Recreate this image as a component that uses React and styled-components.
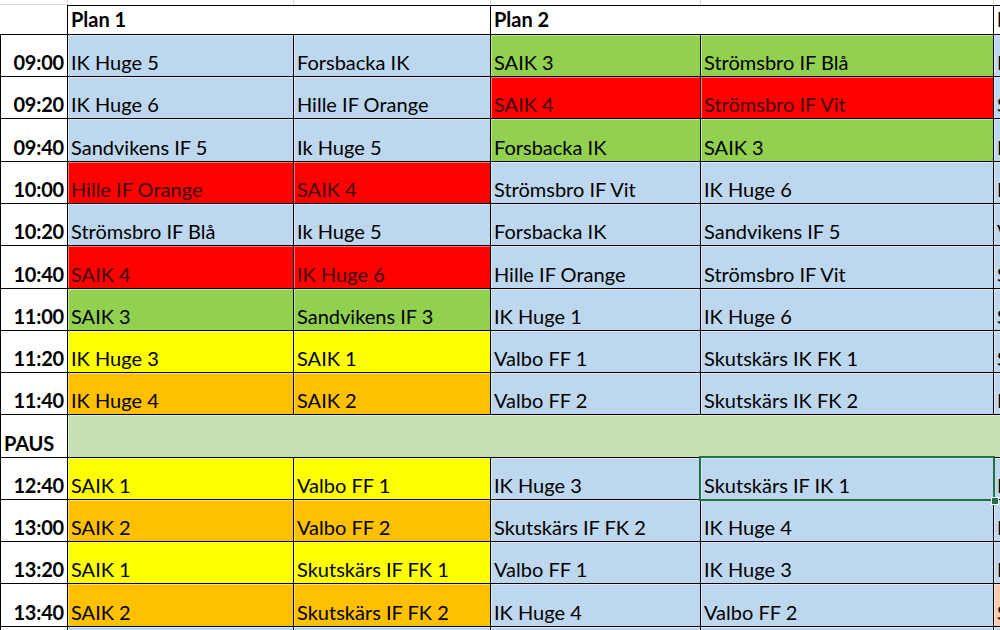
import React from 'react';
import styled, { createGlobalStyle } from 'styled-components';

const fills = {
  blue: '#bdd7ee',
  green: '#92d050',
  red: '#ff0000',
  yellow: '#ffff00',
  orange: '#ffc000',
  pause: '#c6e0b4',
  peach: '#f8cbad',
};

const Global = createGlobalStyle`
  html, body { margin: 0; padding: 0; background: #fff; }
  body { font-family: Lato, "Noto Sans", sans-serif; }
`;

const Sheet = styled.div`
  width: 1000px;
  height: 630px;
  overflow: hidden;
  background: #fff;
`;

const Grid = styled.div`
  display: grid;
  grid-template-columns: 68px 226px 197px 210px 293px 200px;
  grid-template-rows: ${(p) => p.$rows};
  width: max-content;
`;

const StripCell = styled.div`
  box-sizing: border-box;
  border-right: 1px solid #d9d9d9;
  border-bottom: ${(p) => (p.$first ? '1px solid #d9d9d9' : 'none')};
`;

const Cell = styled.div`
  box-sizing: border-box;
  display: flex;
  align-items: flex-end;
  padding: 0 3px 4px 3px;
  background: ${(p) => fills[p.$fill] || '#fff'};
  border-right: 1px solid #000;
  border-bottom: 1px solid #000;
  font-size: 20px;
  line-height: 20px;
  color: ${(p) => (p.$fill === 'red' ? '#3d0000' : '#000')};
  white-space: nowrap;
  grid-column: span ${(p) => p.$span || 1};
  box-shadow: ${(p) => (p.$fill ? 'inset 1px 1px 0 rgba(255,255,255,0.45)' : 'none')};
`;

const HeaderCell = styled(Cell)`
  border-top: ${(p) => (p.$corner ? 'none' : '1px solid #000')};
  border-bottom: 1px solid #000;
  font-weight: 700;
  font-size: 20px;
  padding-bottom: 5px;
`;

const TimeCell = styled(Cell)`
  border-left: 1px solid #000;
  justify-content: ${(p) => (p.$left ? 'flex-start' : 'flex-end')};
  font-weight: 700;
  padding: 0 3px 4px 3px;
  letter-spacing: -0.2px;
`;

const SelectedCell = styled(Cell)`
  position: relative;
`;

const SelectionBox = styled.div`
  position: absolute;
  left: -2px;
  top: -2px;
  right: -2px;
  bottom: -2px;
  border: 2px solid #217346;
  z-index: 2;
  pointer-events: none;
`;

const Handle = styled.div`
  position: absolute;
  right: -5px;
  bottom: -5px;
  width: 6px;
  height: 6px;
  background: #217346;
  outline: 1px solid #fff;
`;

const B = 'blue', G = 'green', R = 'red', Y = 'yellow', O = 'orange';

const rows = [
  { t: '09:00', h: 42, c: [['IK Huge 5', B], ['Forsbacka IK', B], ['SAIK 3', G], ['Strömsbro IF Blå', G], ['IK Huge 1', B]] },
  { t: '09:20', h: 42, c: [['IK Huge 6', B], ['Hille IF Orange', B], ['SAIK 4', R], ['Strömsbro IF Vit', R], ['Sandvikens IF 3', B]] },
  { t: '09:40', h: 43, c: [['Sandvikens IF 5', B], ['Ik Huge 5', B], ['Forsbacka IK', G], ['SAIK 3', G], ['IK Huge 2', B]] },
  { t: '10:00', h: 42, c: [['Hille IF Orange', R], ['SAIK 4', R], ['Strömsbro IF Vit', B], ['IK Huge 6', B], ['Hille IF Orange', B]] },
  { t: '10:20', h: 42, c: [['Strömsbro IF Blå', B], ['Ik Huge 5', B], ['Forsbacka IK', B], ['Sandvikens IF 5', B], ['Valbo FF 1', B]] },
  { t: '10:40', h: 43, c: [['SAIK 4', R], ['IK Huge 6', R], ['Hille IF Orange', B], ['Strömsbro IF Vit', B], ['Skutskärs IK FK 1', B]] },
  { t: '11:00', h: 42, c: [['SAIK 3', G], ['Sandvikens IF 3', G], ['IK Huge 1', B], ['IK Huge 6', B], ['SAIK 1', B]] },
  { t: '11:20', h: 42, c: [['IK Huge 3', Y], ['SAIK 1', Y], ['Valbo FF 1', B], ['Skutskärs IK FK 1', B], ['SAIK 2', B]] },
  { t: '11:40', h: 42, c: [['IK Huge 4', O], ['SAIK 2', O], ['Valbo FF 2', B], ['Skutskärs IK FK 2', B], ['IK Huge 5', B]] },
  { pause: true, t: 'PAUS', h: 43 },
  { t: '12:40', h: 42, sel: 3, c: [['SAIK 1', Y], ['Valbo FF 1', Y], ['IK Huge 3', B], ['Skutskärs IF IK 1', B], ['IK Huge 6', B]] },
  { t: '13:00', h: 42, c: [['SAIK 2', O], ['Valbo FF 2', O], ['Skutskärs IF FK 2', B], ['IK Huge 4', B], ['Hille IF Orange', B]] },
  { t: '13:20', h: 42, c: [['SAIK 1', Y], ['Skutskärs IF FK 1', Y], ['Valbo FF 1', B], ['IK Huge 3', B], ['IK Huge 5', B]] },
  { t: '13:40', h: 43, c: [['SAIK 2', O], ['Skutskärs IF FK 2', O], ['IK Huge 4', B], ['Valbo FF 2', B], ['SAIK 4', 'peach']] },
  { t: '14:00', h: 43, c: [['', B], ['', B], ['', B], ['', B], ['', B]] },
];

const template = ['5px', '30px', ...rows.map((r) => `${r.h}px`)].join(' ');

export default function App() {
  return (
    <>
      <Global />
      <Sheet>
        <Grid $rows={template}>
          {[0, 1, 2, 3, 4, 5].map((i) => (
            <StripCell key={`s${i}`} $first={i === 0} />
          ))}
          <HeaderCell $corner />
          <HeaderCell $span={2}>Plan 1</HeaderCell>
          <HeaderCell $span={2}>Plan 2</HeaderCell>
          <HeaderCell>Plan 3</HeaderCell>
          {rows.map((r) =>
            r.pause ? (
              <React.Fragment key={r.t}>
                <TimeCell $left>{r.t}</TimeCell>
                <Cell $fill="pause" $span={5} />
              </React.Fragment>
            ) : (
              <React.Fragment key={r.t}>
                <TimeCell>{r.t}</TimeCell>
                {r.c.map(([text, fill], i) =>
                  r.sel === i ? (
                    <SelectedCell key={i} $fill={fill}>
                      {text}
                      <SelectionBox>
                        <Handle />
                      </SelectionBox>
                    </SelectedCell>
                  ) : (
                    <Cell key={i} $fill={fill}>
                      {text}
                    </Cell>
                  )
                )}
              </React.Fragment>
            )
          )}
        </Grid>
      </Sheet>
    </>
  );
}
